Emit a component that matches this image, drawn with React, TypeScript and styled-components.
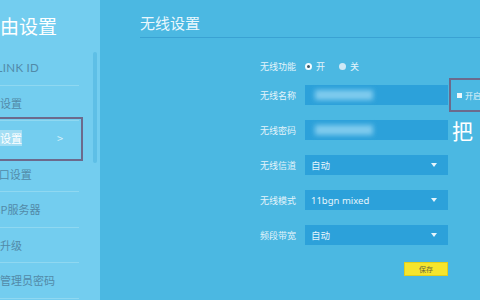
import styled, { createGlobalStyle } from "styled-components";

const GlobalStyle = createGlobalStyle`
  html, body {
    margin: 0;
    padding: 0;
    background: #4bb8e2;
  }
  body {
    font-family: "Noto Sans CJK SC", "Noto Sans", sans-serif;
  }
`;

const Screen = styled.div`
  display: flex;
  width: 480px;
  height: 300px;
  overflow: hidden;
  background: #4bb8e2;
`;

const Sidebar = styled.aside`
  display: flex;
  flex: 0 0 100px;
  background: #73cdef;
`;

const Menu = styled.nav`
  display: flex;
  flex-direction: column;
  flex: 0 0 115px;
  margin-left: -22px;
`;

const Brand = styled.div`
  height: 50px;
  padding-top: 14px;
  box-sizing: border-box;
  margin-left: 3px;
  font-size: 19px;
  line-height: 24px;
  color: #ffffff;
`;

const MenuItem = styled.div<{ $active?: boolean }>`
  display: flex;
  align-items: center;
  justify-content: space-between;
  width: 101px;
  height: 35.5px;
  box-sizing: border-box;
  padding-right: 16px;
  font-size: 11px;
  color: ${(p) => (p.$active ? "#ffffff" : "#528aa8")};
  border-bottom: 1px solid ${(p) => (p.$active ? "transparent" : "#8fd8f1")};
  outline: ${(p) => (p.$active ? "2px solid #6c6a8c" : "none")};
  outline-offset: 2px;
`;

const Latin = styled.span`
  font-family: "Lato", "Noto Sans", sans-serif;
  font-size: 11.5px;
  letter-spacing: 0.3px;
`;

const Highlight = styled.span`
  background: rgba(255, 255, 255, 0.35);
`;

const Chevron = styled.span`
  font-size: 11px;
  color: #d6f0fa;
`;

const ScrollTrack = styled.div`
  width: 4px;
  height: 111px;
  margin-top: 52px;
  background: #5ebfe6;
  border-radius: 2px;
`;

const Main = styled.main`
  flex: 1;
  padding-left: 40px;
  display: flex;
  flex-direction: column;
`;

const Header = styled.div`
  height: 38px;
  box-sizing: border-box;
  padding-top: 13px;
  font-size: 15px;
  line-height: 20px;
  color: #e9f7fd;
  border-bottom: 1px solid #3aa2d3;
`;

const Form = styled.div`
  display: flex;
  flex-direction: column;
  gap: 15px;
  margin-top: 18px;
  margin-left: 100px;
`;

const Row = styled.div<{ $tight?: boolean }>`
  display: flex;
  align-items: center;
  height: 20px;
  margin-bottom: ${(p) => (p.$tight ? "-6px" : "0")};
`;

const Label = styled.label`
  width: 56px;
  margin-right: 9px;
  text-align: right;
  font-size: 9px;
  color: #e3f4fb;
`;

const Radio = styled.span<{ $checked?: boolean }>`
  display: inline-flex;
  align-items: center;
  gap: 4px;
  margin-right: 14px;
  font-size: 9px;
  color: #e3f4fb;
  &::before {
    content: "";
    width: 7px;
    height: 7px;
    box-sizing: border-box;
    border-radius: 50%;
    background: ${(p) => (p.$checked ? "#3c5868" : "#cfe9f6")};
    border: ${(p) => (p.$checked ? "2px solid #f2fbff" : "none")};
  }
`;

const Field = styled.div`
  display: flex;
  align-items: center;
  justify-content: space-between;
  width: 143px;
  height: 20px;
  box-sizing: border-box;
  padding: 0 11px 0 6px;
  background: #2ca1da;
  font-size: 9.5px;
  font-family: "Noto Sans", "Noto Sans CJK SC", sans-serif;
  color: #e6f5fc;
`;

const Blurred = styled.span`
  display: inline-block;
  width: 58px;
  height: 10px;
  margin-left: 4px;
  background: #7fcbee;
  filter: blur(2.5px);
`;

const Arrow = styled.span`
  width: 0;
  height: 0;
  border-left: 3px solid transparent;
  border-right: 3px solid transparent;
  border-top: 4px solid #e6f5fc;
`;

const Callout = styled.div`
  display: flex;
  align-items: center;
  gap: 3px;
  height: 34px;
  width: 60px;
  margin: -7px 0 -7px 1px;
  box-sizing: border-box;
  padding-left: 6px;
  border: 2px solid #6c6a8c;
  font-size: 8px;
  color: #e3f4fb;
  white-space: nowrap;
  flex-shrink: 0;
`;

const Box = styled.span`
  width: 5px;
  height: 5px;
  flex-shrink: 0;
  background: #eef8fc;
`;

const BigChar = styled.span`
  margin-left: 4px;
  font-size: 21px;
  line-height: 20px;
  color: #ffffff;
`;

const Actions = styled.div`
  display: flex;
  justify-content: flex-end;
  width: 208px;
  margin-top: 2px;
`;

const SaveButton = styled.button`
  width: 44px;
  height: 14px;
  padding: 0;
  border: 1px solid #e0cf1c;
  background: #f6e52d;
  font-family: "Noto Sans CJK SC", sans-serif;
  font-size: 7px;
  line-height: 12px;
  color: #6c6a3a;
`;

const menu = ["上网设置", "无线设置", "LAN口设置", "DHCP服务器", "软件升级", "修改管理员密码"];

export default function App() {
  return (
    <>
      <GlobalStyle />
      <Screen>
        <Sidebar>
          <Menu>
            <Brand>路由设置</Brand>
            <MenuItem>
              <Latin>TP-LINK ID</Latin>
            </MenuItem>
            {menu.map((m) =>
              m === "无线设置" ? (
                <MenuItem key={m} $active>
                  <span>
                    无线<Highlight>设置</Highlight>
                  </span>
                  <Chevron>&gt;</Chevron>
                </MenuItem>
              ) : (
                <MenuItem key={m}>{m}</MenuItem>
              )
            )}
          </Menu>
          <ScrollTrack />
        </Sidebar>
        <Main>
          <Header>无线设置</Header>
          <Form>
            <Row $tight>
              <Label>无线功能</Label>
              <Radio $checked>开</Radio>
              <Radio>关</Radio>
            </Row>
            <Row>
              <Label>无线名称</Label>
              <Field>
                <Blurred />
              </Field>
              <Callout>
                <Box />
                开启无线广播
              </Callout>
            </Row>
            <Row>
              <Label>无线密码</Label>
              <Field>
                <Blurred />
              </Field>
              <BigChar>把</BigChar>
            </Row>
            <Row>
              <Label>无线信道</Label>
              <Field>
                自动
                <Arrow />
              </Field>
            </Row>
            <Row>
              <Label>无线模式</Label>
              <Field>
                11bgn mixed
                <Arrow />
              </Field>
            </Row>
            <Row>
              <Label>频段带宽</Label>
              <Field>
                自动
                <Arrow />
              </Field>
            </Row>
            <Actions>
              <SaveButton>保存</SaveButton>
            </Actions>
          </Form>
        </Main>
      </Screen>
    </>
  );
}
